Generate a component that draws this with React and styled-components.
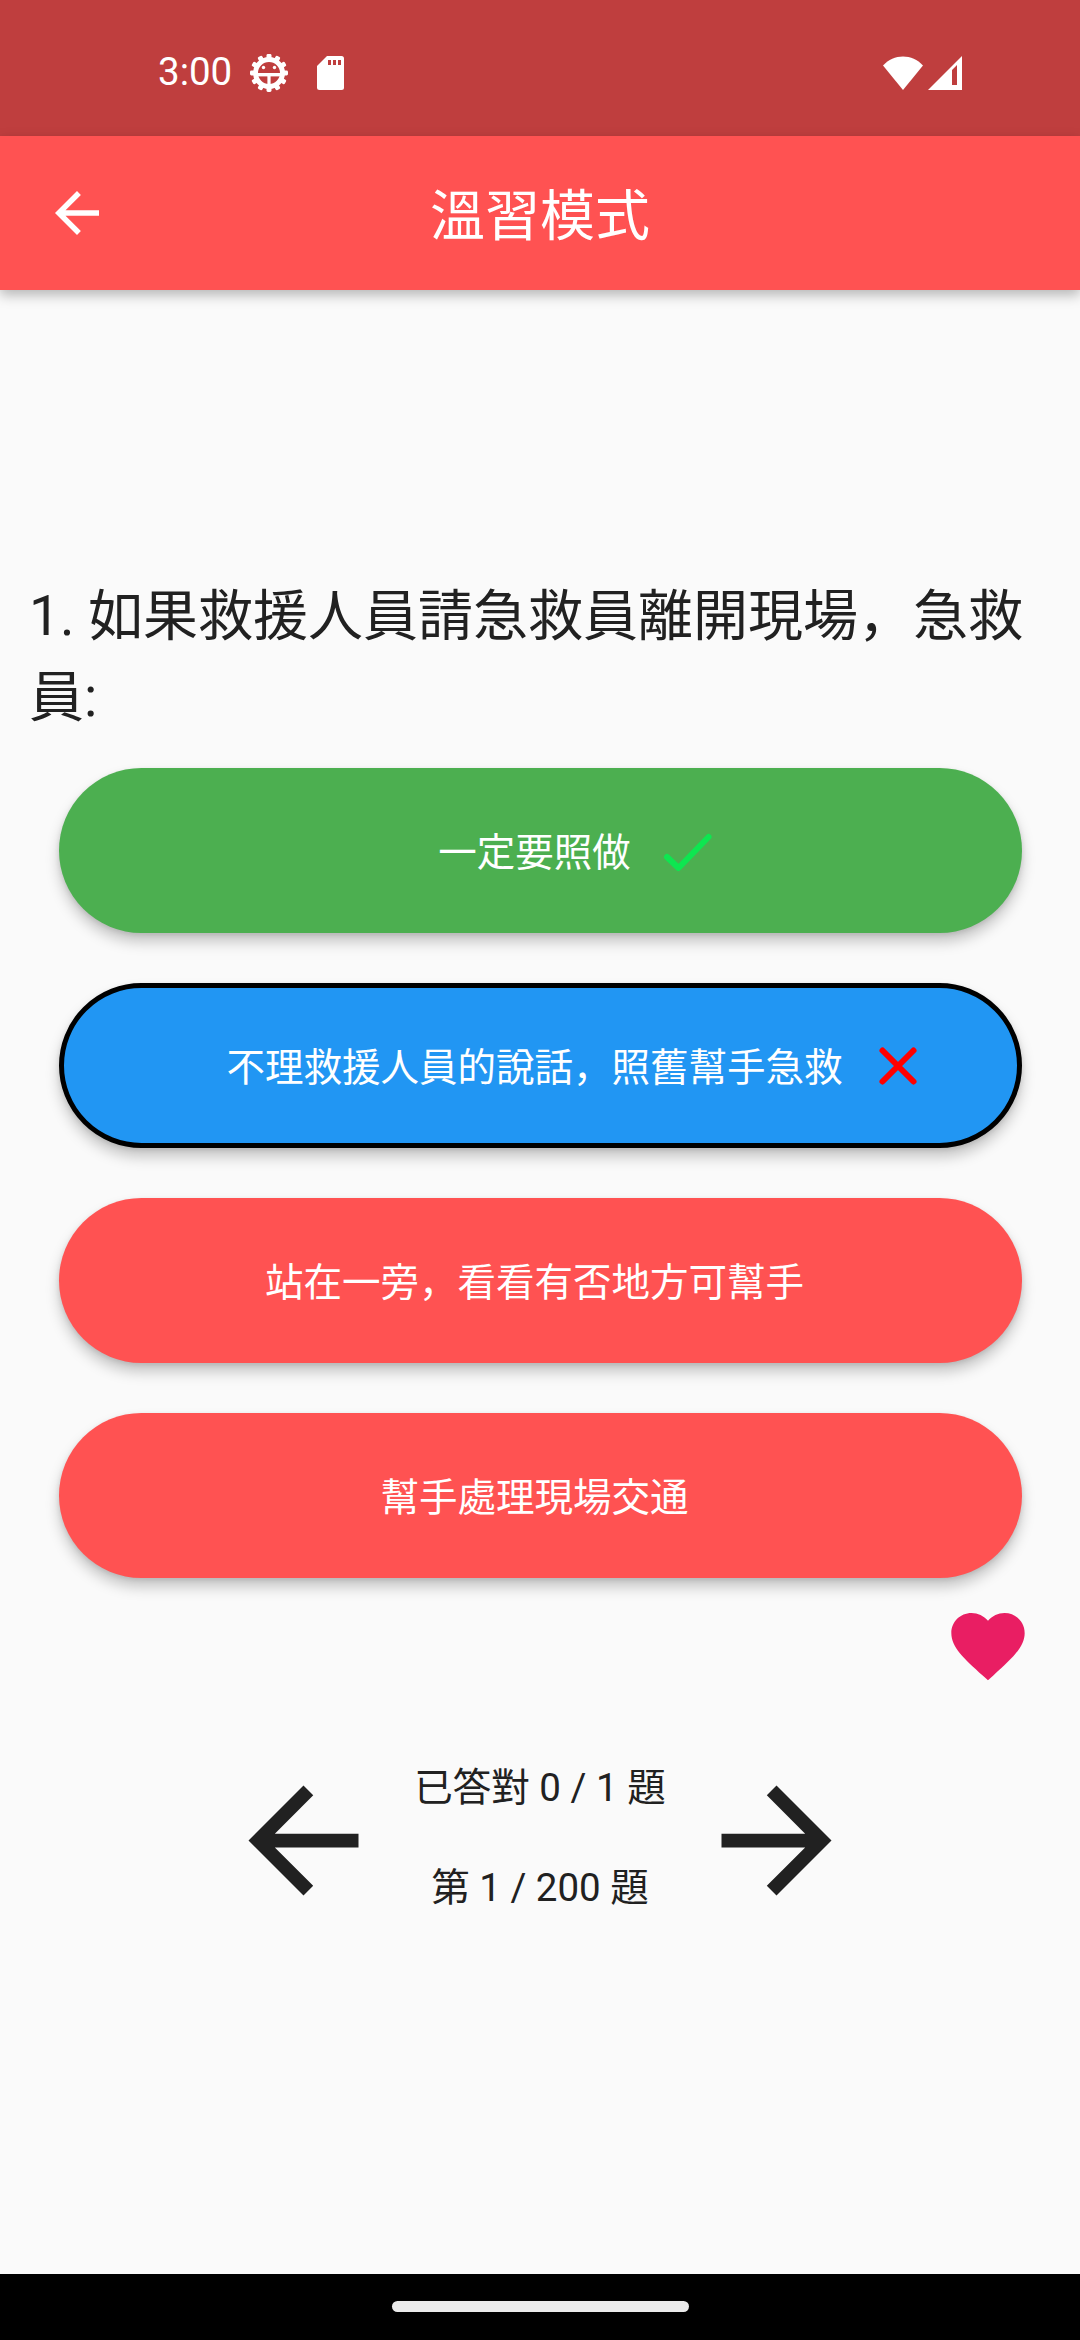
import React from "react";
import styled, { createGlobalStyle } from "styled-components";

const Global = createGlobalStyle`
  html, body { margin: 0; padding: 0; background: #fafafa; }
  * { box-sizing: border-box; }
`;

const FONT = `Roboto, "Noto Sans CJK JP", "Noto Sans CJK SC", sans-serif`;

const Page = styled.div`
  width: 1080px;
  height: 2340px;
  display: flex;
  flex-direction: column;
  overflow: hidden;
  background: #fafafa;
  font-family: ${FONT};
`;

const StatusBar = styled.div`
  height: 136px;
  flex: none;
  background: #bf3e3e;
  display: flex;
  align-items: center;
  justify-content: space-between;
  padding: 9px 118px 0 158px;
  color: #fff;
`;
const StatusGroup = styled.div`
  display: flex;
  align-items: center;
`;
const Clock = styled.span`
  font-size: 38.5px;
  line-height: 46px;
  width: 75px;
  margin-top: -1px;
`;
const StatusIcon = styled.svg`
  display: block;
  flex: none;
  margin-left: ${(p) => p.$gap || 0}px;
`;

const AppBar = styled.header`
  height: 154px;
  flex: none;
  background: #ff5252;
  box-shadow: 0 5px 12px rgba(0, 0, 0, 0.28);
  display: grid;
  grid-template-columns: 110px 1fr 110px;
  align-items: center;
  position: relative;
  z-index: 1;
  color: #fff;
`;
const BackBox = styled.div`
  padding-left: 44px;
  display: flex;
`;
const Title = styled.h1`
  margin: 6px 0 0;
  font-size: 55px;
  font-weight: 400;
  line-height: 64px;
  text-align: center;
`;

const Body = styled.main`
  flex: 1;
  min-height: 0;
  display: flex;
  flex-direction: column;
  padding-top: 286px;
`;
const Question = styled.p`
  margin: 0 0 30px;
  padding: 0 29px;
  font-size: 55px;
  line-height: 81px;
  color: #212121;
`;
const Options = styled.div`
  display: flex;
  flex-direction: column;
  gap: 50px;
  padding: 0 58.500px;
`;
const Option = styled.button`
  height: 165px;
  border-radius: 83px;
  border: ${(p) => (p.$picked ? "5.5px solid #000" : "none")};
  background: ${(p) => p.$bg};
  box-shadow: 0 9px 14px rgba(0, 0, 0, 0.21), 0 2px 5px rgba(0, 0, 0, 0.1);
  color: #fff;
  font-family: inherit;
  font-size: 38.5px;
  display: flex;
  align-items: center;
  justify-content: center;
  padding: 0;
`;
const OptionText = styled.span`
  margin: 5px 11px 0 0;
  line-height: 56px;
`;
const Mark = styled.svg`
  display: block;
  flex: none;
  margin-right: -88px;
`;

const FavRow = styled.div`
  display: flex;
  justify-content: flex-end;
  padding: 24px 48px 0 0;
`;
const Pager = styled.div`
  display: flex;
  justify-content: center;
  align-items: center;
  margin-top: 68px;
`;
const Counts = styled.div`
  width: 308px;
  display: flex;
  flex-direction: column;
  align-items: center;
  gap: 44px;
  margin-bottom: 5px;
  color: #212121;
  font-size: 38.5px;
  line-height: 56px;
`;
const Arrow = styled.svg`
  display: block;
  flex: none;
  fill: ${(p) => p.$color || "#212121"};
`;
const Fav = styled.svg`
  display: block;
  fill: #e91e63;
`;

const NavBar = styled.div`
  height: 66px;
  flex: none;
  background: #000;
  display: flex;
  justify-content: center;
  padding-top: 27px;
`;
const Handle = styled.div`
  width: 297px;
  height: 11px;
  border-radius: 6px;
  background: #ebebeb;
`;

const BACK = "M20 11H7.83l5.59-5.59L12 4l-8 8 8 8 1.41-1.41L7.83 13H20v-2z";
const FORWARD = "M12 4l-1.41 1.41L16.17 11H4v2h12.17l-5.58 5.59L12 20l8-8z";

const Gear = () => {
  const teeth = Array.from({ length: 12 }, (_, i) => i * 30);
  return (
    <StatusIcon $gap={17} width="38" height="38" viewBox="0 0 38 38">
      {teeth.map((a) => (
        <rect key={a} x="16.5" y="0" width="5" height="6" rx="1.4" fill="#fff" transform={`rotate(${a} 19 19)`} />
      ))}
      <circle cx="19" cy="19" r="13.5" fill="none" stroke="#fff" strokeWidth="5" />
      <rect x="6" y="19" width="26" height="3.4" fill="#fff" />
      <rect x="17.4" y="19" width="3.2" height="14" fill="#fff" />
      <circle cx="13.5" cy="13.5" r="1.7" fill="#fff" />
      <circle cx="24.5" cy="13.5" r="1.7" fill="#fff" />
    </StatusIcon>
  );
};

const SdCard = () => (
  <StatusIcon $gap={29} width="27" height="34" viewBox="0 0 27 34">
    <path
      fill="#fff"
      d="M10 0h14.5a2.5 2.5 0 0 1 2.5 2.5v29a2.5 2.5 0 0 1-2.5 2.5h-22A2.5 2.5 0 0 1 0 31.500V10z"
    />
    <rect x="11" y="4" width="3" height="5" fill="#bf3e3e" />
    <rect x="16" y="4" width="3" height="5" fill="#bf3e3e" />
    <rect x="21" y="4" width="3" height="5" fill="#bf3e3e" />
  </StatusIcon>
);

const Wifi = () => (
  <StatusIcon width="40" height="34" viewBox="0 0 40 34">
    <path fill="#fff" d="M20 34L0 9.500C5.500 3.500 12.500 0.500 20 0.500S34.500 3.500 40 9.500z" />
  </StatusIcon>
);

const Signal = () => (
  <StatusIcon $gap={5} width="34" height="34" viewBox="0 0 34 34">
    <path fill="#fff" fillRule="evenodd" d="M34 0V34H0zM24 14L29 9V29H24z" />
  </StatusIcon>
);

const CheckMark = () => (
  <Mark width="88" height="66" viewBox="0 0 88 66">
    <path d="M25 39L36.500 50L66.500 19" fill="none" stroke="#0ee650" strokeWidth="6" strokeLinecap="round" strokeLinejoin="round" />
  </Mark>
);

const CrossMark = () => (
  <Mark width="88" height="66" viewBox="0 0 88 66">
    <path d="M28.500 17.500L59.500 48.500M59.500 17.500L28.500 48.500" fill="none" stroke="#ff0000" strokeWidth="6" strokeLinecap="round" />
  </Mark>
);

const options = [
  { text: "一定要照做", bg: "#4caf50", mark: <CheckMark /> },
  { text: "不理救援人員的說話，照舊幫手急救", bg: "#2196f3", picked: true, mark: <CrossMark /> },
  { text: "站在一旁，看看有否地方可幫手", bg: "#ff5252" },
  { text: "幫手處理現場交通", bg: "#ff5252" },
];

export default function App() {
  return (
    <Page>
      <Global />
      <StatusBar>
        <StatusGroup>
          <Clock>3:00</Clock>
          <Gear />
          <SdCard />
        </StatusGroup>
        <StatusGroup>
          <Wifi />
          <Signal />
        </StatusGroup>
      </StatusBar>
      <AppBar>
        <BackBox>
          <Arrow $color="#fff" width="66" height="66" viewBox="0 0 24 24">
            <path d={BACK} />
          </Arrow>
        </BackBox>
        <Title>溫習模式</Title>
        <span />
      </AppBar>
      <Body>
        <Question>1. 如果救援人員請急救員離開現場，急救員:</Question>
        <Options>
          {options.map((o) => (
            <Option key={o.text} $bg={o.bg} $picked={o.picked}>
              <OptionText>{o.text}</OptionText>
              {o.mark}
            </Option>
          ))}
        </Options>
        <FavRow>
          <Fav width="88" height="88" viewBox="0 0 24 24">
            <path d="M12 21.350l-1.450-1.320C5.400 15.360 2 12.280 2 8.500 2 5.420 4.420 3 7.500 3c1.740 0 3.340.81 4.500 2.090C13.160 3.810 14.760 3 16.500 3 19.580 3 22 5.420 22 8.500c0 3.780-3.400 6.860-8.550 11.540L12 21.350z" />
          </Fav>
        </FavRow>
        <Pager>
          <Arrow width="165" height="165" viewBox="0 0 24 24">
            <path d={BACK} />
          </Arrow>
          <Counts>
            <span>已答對 0 / 1 題</span>
            <span>第 1 / 200 題</span>
          </Counts>
          <Arrow width="165" height="165" viewBox="0 0 24 24">
            <path d={FORWARD} />
          </Arrow>
        </Pager>
      </Body>
      <NavBar>
        <Handle />
      </NavBar>
    </Page>
  );
}
